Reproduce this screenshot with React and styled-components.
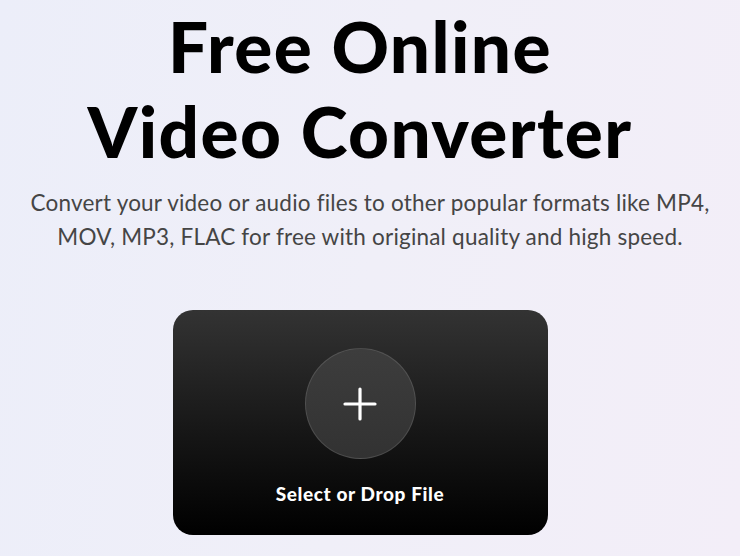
import React from 'react'
import styled, { createGlobalStyle } from 'styled-components'

const GlobalStyle = createGlobalStyle`
  html, body {
    margin: 0;
    padding: 0;
  }
  body {
    background: linear-gradient(100deg, #eceef9 0%, #f0eff8 50%, #f3eef8 100%);
    font-family: Lato, "Noto Sans", sans-serif;
    min-height: 556px;
    overflow: hidden;
  }
`

const Hero = styled.main`
  width: 720px;
  display: flex;
  flex-direction: column;
  align-items: center;
  padding-top: 3px;
`

const Title = styled.h1`
  margin: 0;
  font-family: Lato, "Noto Sans", sans-serif;
  font-weight: 900;
  font-size: 71px;
  line-height: 85px;
  color: #000;
  text-align: center;
  letter-spacing: 1.4px;
`

const Subtitle = styled.p`
  margin: 13px 0 0;
  width: 740px;
  padding-left: 20px;
  box-sizing: border-box;
  font-family: Lato, "Noto Sans", sans-serif;
  font-weight: 400;
  font-size: 22.5px;
  line-height: 34px;
  color: #454545;
  text-align: center;
  letter-spacing: 0.2px;
  white-space: nowrap;
`

const DropCard = styled.div`
  margin-top: 56px;
  width: 375px;
  height: 225px;
  border-radius: 20px;
  background: linear-gradient(180deg, #333333 0%, #161616 55%, #000000 100%);
  display: flex;
  flex-direction: column;
  align-items: center;
  padding-top: 38px;
  box-sizing: border-box;
  cursor: pointer;
`

const PlusCircle = styled.div`
  width: 111px;
  height: 111px;
  border-radius: 50%;
  background: linear-gradient(180deg, #3d3d3d 0%, #323232 100%);
  border: 1px solid rgba(255, 255, 255, 0.12);
  box-sizing: border-box;
  display: flex;
  align-items: center;
  justify-content: center;
`

const Label = styled.span`
  margin-top: 23px;
  font-family: Lato, "Noto Sans", sans-serif;
  font-weight: 900;
  font-size: 19px;
  letter-spacing: 0.6px;
  color: #fff;
`

export default function App() {
  return (
    <>
      <GlobalStyle />
      <Hero>
        <Title>
          Free Online
          <br />
          Video Converter
        </Title>
        <Subtitle>
          Convert your video or audio files to other popular formats like MP4,
          <br />
          MOV, MP3, FLAC for free with original quality and high speed.
        </Subtitle>
        <DropCard>
          <PlusCircle>
            <svg width="34" height="34" viewBox="0 0 34 34">
              <path d="M17 2v30M2 17h30" stroke="#fff" strokeWidth="3.2" strokeLinecap="round" />
            </svg>
          </PlusCircle>
          <Label>Select or Drop File</Label>
        </DropCard>
      </Hero>
    </>
  )
}
